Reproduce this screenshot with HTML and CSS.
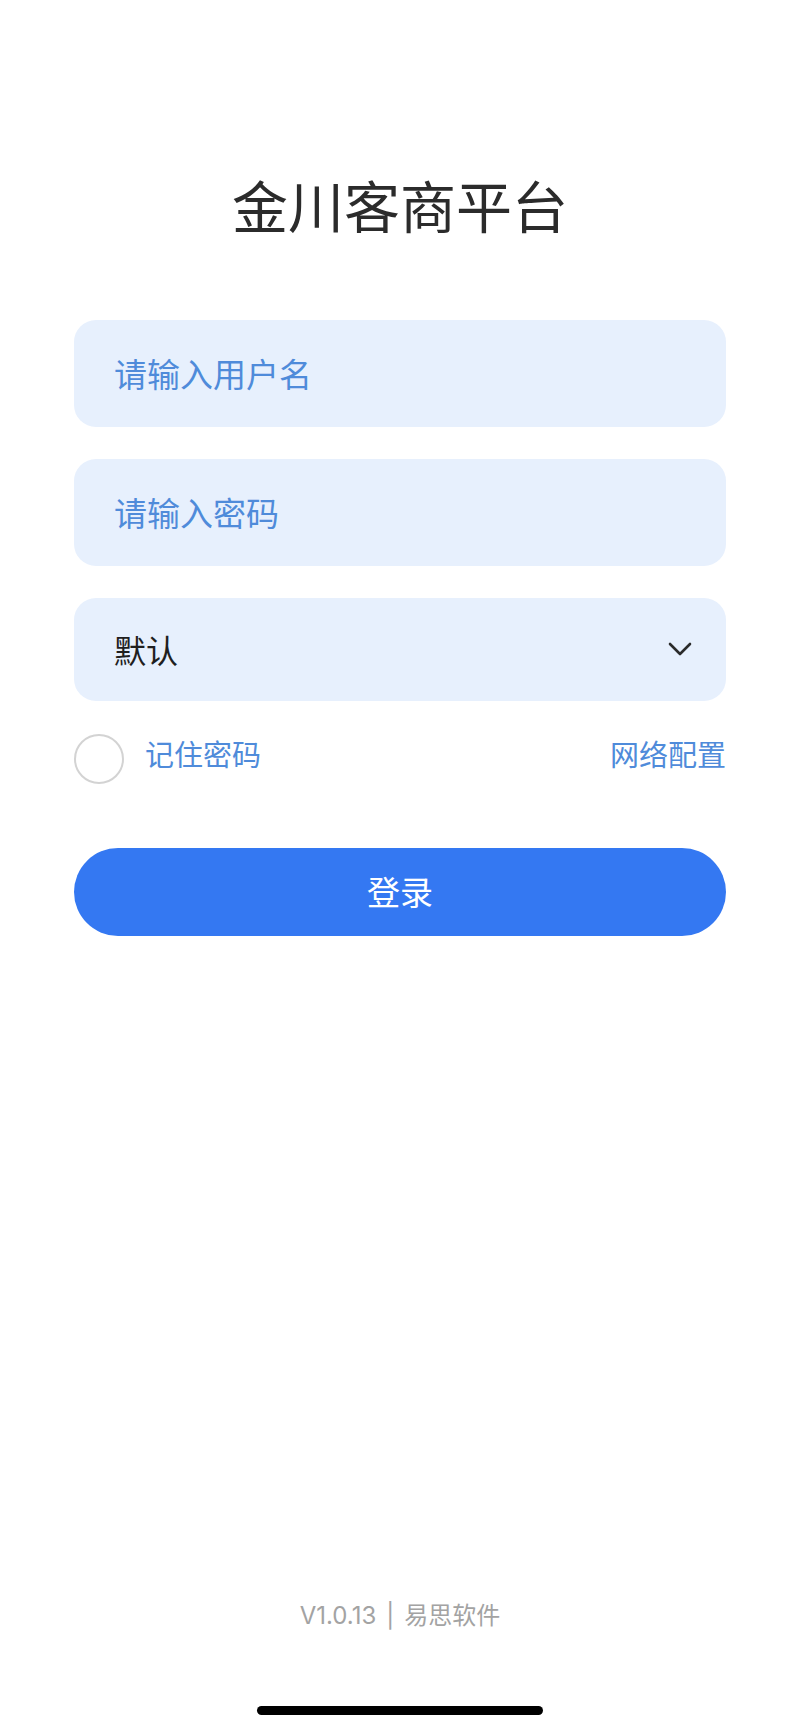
FILE: index.html
```html
<!DOCTYPE html>
<html lang="zh-CN">
<head>
<meta charset="utf-8">
<title>金川客商平台</title>
<link rel="stylesheet" href="styles.css">
</head>
<body>
<div class="page">
  <main class="login">
    <h1 class="title">金川客商平台</h1>
    <div class="field"><span class="placeholder">请输入用户名</span></div>
    <div class="field"><span class="placeholder">请输入密码</span></div>
    <div class="field select">
      <span class="value">默认</span>
      <svg class="chevron" width="24" height="14" viewBox="0 0 24 14" aria-hidden="true">
        <path d="M2 2 L12 12 L22 2" fill="none" stroke="#2b2b2b" stroke-width="2.6" stroke-linecap="round" stroke-linejoin="round"/>
      </svg>
    </div>
    <div class="options">
      <label class="remember"><span class="radio"></span><span class="link">记住密码</span></label>
      <span class="link">网络配置</span>
    </div>
    <button class="submit" type="button">登录</button>
  </main>
  <footer class="footer">
    <div class="version">V1.0.13<span class="sep">|</span>易思软件</div>
    <div class="home-bar"></div>
  </footer>
</div>
</body>
</html>
```

FILE: styles.css
```css
* { box-sizing: border-box; }
html, body { margin: 0; padding: 0; background: #ffffff; }
body {
  font-family: "Inter", "Noto Sans CJK SC", "Noto Sans", sans-serif;
  color: #222;
}
.page {
  min-height: 1731px;
  display: flex;
  flex-direction: column;
  padding: 0 74px;
}
.login {
  display: flex;
  flex-direction: column;
}
.title {
  margin: 180px 0 0;
  font-size: 56px;
  line-height: 56px;
  font-weight: 400;
  text-align: center;
  color: #2b2b2b;
}
.field {
  height: 107px;
  margin-top: 32px;
  background: #e7f0fd;
  border-radius: 22px;
  display: flex;
  align-items: center;
  padding: 0 34px 2px 40px;
}
.title + .field { margin-top: 84px; }
.placeholder {
  font-size: 33px;
  color: #4f8bda;
}
.select {
  height: 103px;
  justify-content: space-between;
}
.value {
  font-size: 32px;
  color: #1f1f1f;
}
.chevron { display: block; }
.options {
  margin-top: 33px;
  height: 50px;
  display: flex;
  align-items: center;
  justify-content: space-between;
}
.remember {
  display: flex;
  align-items: center;
  gap: 21px;
}
.radio {
  width: 50px;
  height: 50px;
  border-radius: 50%;
  border: 2px solid #d3d3d3;
  background: #fff;
}
.link {
  font-size: 29px;
  line-height: 40px;
  padding-bottom: 6px;
  color: #4f8bda;
}
.submit {
  margin-top: 64px;
  height: 88px;
  border: 0;
  border-radius: 44px;
  background: #3478f2;
  color: #ffffff;
  font-family: inherit;
  font-size: 33px;
  padding: 0 0 2px;
}
.footer {
  margin-top: auto;
  display: flex;
  flex-direction: column;
  align-items: center;
}
.version {
  font-size: 24px;
  line-height: 30px;
  color: #a3a3a3;
}
.sep {
  margin: 0 10px;
}
.home-bar {
  margin: 75px 0 16px;
  width: 286px;
  height: 9px;
  border-radius: 5px;
  background: #000;
}
```
